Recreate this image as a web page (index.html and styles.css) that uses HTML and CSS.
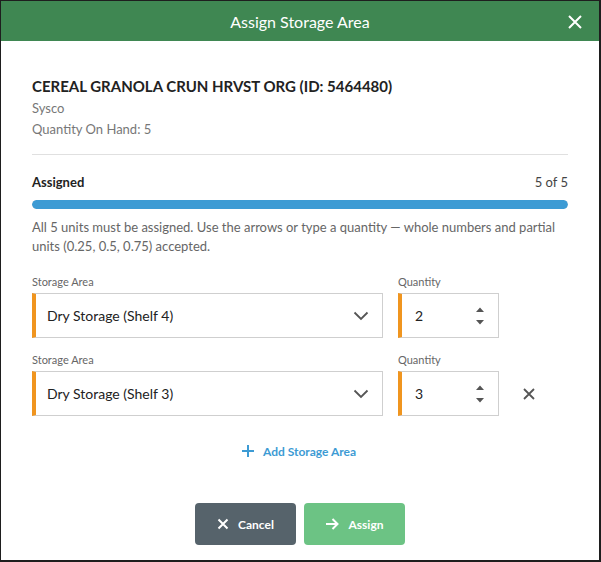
FILE: index.html
```
<!DOCTYPE html>
<html>
<head>
<meta charset="utf-8">
<link rel="stylesheet" href="styles.css">
</head>
<body>
<div class="modal">
  <div class="header">
    <div class="title">Assign Storage Area</div>
    <div class="close">
      <svg width="16" height="16" viewBox="0 0 16 16"><path d="M2 2L14 14M14 2L2 14" stroke="#fff" stroke-width="2" fill="none"/></svg>
    </div>
  </div>
  <div class="body">
    <div class="item-name">CEREAL GRANOLA CRUN HRVST ORG (ID: 5464480)</div>
    <div class="meta">Sysco</div>
    <div class="meta">Quantity On Hand: 5</div>
    <div class="divider"></div>
    <div class="assigned-row">
      <span class="assigned">Assigned</span>
      <span class="count">5 of 5</span>
    </div>
    <div class="bar"><div class="bar-fill" style="width:100%"></div></div>
    <p class="help">All 5 units must be assigned. Use the arrows or type a quantity — whole numbers and partial units (0.25, 0.5, 0.75) accepted.</p>

    <div class="row">
      <div class="field area">
        <label>Storage Area</label>
        <div class="select">
          <span>Dry Storage (Shelf 4)</span>
          <svg width="16" height="10" viewBox="0 0 16 10"><path d="M1.5 1.5L8 8L14.5 1.5" stroke="#555" stroke-width="1.8" fill="none"/></svg>
        </div>
      </div>
      <div class="field qty">
        <label>Quantity</label>
        <div class="number">
          <span>2</span>
          <svg class="spin" width="10" height="22" viewBox="0 0 10 22"><path d="M1 7L5 2.5L9 7Z M1 15L5 19.5L9 15Z" fill="#555"/></svg>
        </div>
      </div>
    </div>

    <div class="row">
      <div class="field area">
        <label>Storage Area</label>
        <div class="select">
          <span>Dry Storage (Shelf 3)</span>
          <svg width="16" height="10" viewBox="0 0 16 10"><path d="M1.5 1.5L8 8L14.5 1.5" stroke="#555" stroke-width="1.8" fill="none"/></svg>
        </div>
      </div>
      <div class="field qty">
        <label>Quantity</label>
        <div class="number">
          <span>3</span>
          <svg class="spin" width="10" height="22" viewBox="0 0 10 22"><path d="M1 7L5 2.5L9 7Z M1 15L5 19.5L9 15Z" fill="#555"/></svg>
        </div>
      </div>
      <div class="remove">
        <svg width="14" height="14" viewBox="0 0 14 14"><path d="M2 2L12 12M12 2L2 12" stroke="#555" stroke-width="1.8" fill="none"/></svg>
      </div>
    </div>

    <div class="add">
      <svg width="14" height="14" viewBox="0 0 14 14"><path d="M7 1V13M1 7H13" stroke="#3d9bd4" stroke-width="2" fill="none"/></svg>
      <span>Add Storage Area</span>
    </div>

    <div class="actions">
      <button class="btn cancel">
        <svg width="12" height="12" viewBox="0 0 12 12"><path d="M1.5 1.5L10.5 10.5M10.5 1.5L1.5 10.5" stroke="#fff" stroke-width="2" fill="none"/></svg>
        <span>Cancel</span>
      </button>
      <button class="btn assign">
        <svg width="14" height="12" viewBox="0 0 14 12"><path d="M1 6H12.5M7.5 1L12.5 6L7.5 11" stroke="#fff" stroke-width="2" fill="none"/></svg>
        <span>Assign</span>
      </button>
    </div>
  </div>
</div>
</body>
</html>
```
FILE: styles.css
```
* { box-sizing: border-box; }
html, body { margin: 0; padding: 0; }
body {
  font-family: Lato, "Liberation Sans", sans-serif;
  background: #fff;
  color: #222;
}
.modal {
  width: 601px;
  height: 562px;
  border: 1px solid #1e1e1e;
  border-bottom-width: 2px;
  border-right-width: 2px;
  background: #fff;
  display: flex;
  flex-direction: column;
}
.header {
  height: 40px;
  background: #3f8752;
  color: #fff;
  display: flex;
  align-items: center;
  justify-content: center;
  position: relative;
  flex-shrink: 0;
}
.title { font-size: 16px; }
.close {
  position: absolute;
  right: 16px;
  top: 13px;
  width: 16px;
  height: 16px;
  display: flex;
}
.body {
  padding: 35px 31px 0 31px;
  display: flex;
  flex-direction: column;
}
.item-name {
  font-size: 15px;
  font-weight: 700;
  color: #222;
  line-height: 20px;
}
.meta {
  font-size: 13px;
  color: #777;
  line-height: 21px;
}
.item-name + .meta { margin-top: 2px; }
.divider {
  height: 1px;
  background: #e0e0e0;
  margin-top: 14px;
}
.assigned-row {
  display: flex;
  justify-content: space-between;
  margin-top: 18px;
  font-size: 13px;
  line-height: 18px;
}
.assigned { font-weight: 700; color: #222; }
.count { color: #444; }
.bar {
  margin-top: 9px;
  height: 9px;
  border-radius: 5px;
  background: #e6e6e6;
  overflow: hidden;
}
.bar-fill {
  height: 100%;
  background: #3d9bd4;
  border-radius: 5px;
}
.help {
  margin: 9px 0 0 0;
  font-size: 13px;
  line-height: 19px;
  color: #666;
}
.row {
  display: flex;
  align-items: flex-end;
  margin-top: 19px;
}
.row + .row { margin-top: 15px; }
.field label {
  display: block;
  font-size: 11px;
  color: #666;
  line-height: 14px;
  margin-bottom: 4px;
}
.area { width: 351px; }
.qty { width: 101px; margin-left: 15px; }
.select, .number {
  height: 45px;
  border: 1px solid #cfcfcf;
  border-left: 4px solid #f0951f;
  display: flex;
  align-items: center;
  font-size: 14px;
  color: #222;
}
.select {
  justify-content: space-between;
  padding: 0 13px 0 11px;
}
.number {
  justify-content: space-between;
  padding: 0 13px 0 13px;
}
.spin { display: block; }
.remove {
  width: 14px;
  height: 45px;
  margin-left: 23px;
  display: flex;
  align-items: center;
}
.add {
  display: flex;
  align-items: center;
  justify-content: center;
  gap: 8px;
  margin-top: 27px;
  margin-left: -3px;
  color: #3d9bd4;
  font-size: 12px;
  font-weight: 700;
  height: 16px;
}
.actions {
  display: flex;
  justify-content: center;
  gap: 8px;
  margin-top: 44px;
}
.btn {
  width: 101px;
  height: 42px;
  border: none;
  border-radius: 4px;
  display: flex;
  align-items: center;
  justify-content: center;
  gap: 9px;
  font-family: Lato, "Liberation Sans", sans-serif;
  font-size: 12px;
  font-weight: 700;
  color: #fff;
  padding: 0;
}
.cancel { background: #56636b; }
.assign { background: #6cc384; }
```
